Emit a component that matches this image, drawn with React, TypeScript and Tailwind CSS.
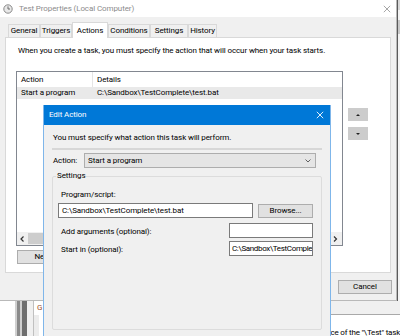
import React from "react";

function TitleIcon() {
  return (
    <svg width="10" height="10" viewBox="0 0 10 10" className="shrink-0">
      <circle cx="5" cy="5" r="4.2" fill="#e8e8e8" stroke="#8a8a8a" strokeWidth="1" />
      <path d="M5 2.4 V5 H7" fill="none" stroke="#6a6a6a" strokeWidth="1" />
    </svg>
  );
}

function CloseX({ color, size }: { color: string; size: number }) {
  return (
    <svg width={size} height={size} viewBox="0 0 10 10">
      <path d="M1 1 L9 9 M9 1 L1 9" stroke={color} strokeWidth="1.1" />
    </svg>
  );
}

function Tab({ label, w, selected }: { label: string; w: string; selected?: boolean }) {
  return (
    <div
      className={
        selected
          ? `${w} h-[16px] -mb-px bg-white border border-b-0 border-[#d9d9d9] flex items-center justify-center z-10`
          : `${w} h-[13px] bg-[#f0f0f0] border border-b-0 border-[#d9d9d9] flex items-center justify-center`
      }
    >
      {label}
    </div>
  );
}

function Tri({ up }: { up?: boolean }) {
  return (
    <svg width="4" height="2" viewBox="0 0 4 2">
      <path d={up ? "M0 2 L2 0 L4 2 Z" : "M0 0 L2 2 L4 0 Z"} fill="#222" />
    </svg>
  );
}

function Chevron({ dir }: { dir: "left" | "right" | "down" }) {
  if (dir === "down") {
    return (
      <svg width="6" height="4" viewBox="0 0 6 4">
        <path d="M0.5 0.5 L3 3 L5.5 0.5" fill="none" stroke="#606060" strokeWidth="1" />
      </svg>
    );
  }
  const d = dir === "left" ? "M3.5 0.5 L1 3 L3.5 5.5" : "M1 0.5 L3.5 3 L1 5.5";
  return (
    <svg width="5" height="6" viewBox="0 0 5 6">
      <path d={d} fill="none" stroke="#333" strokeWidth="1.2" />
    </svg>
  );
}

function MainWindow() {
  return (
    <div className="w-[397px] h-[301px] flex flex-col border-r border-b border-[#b9b9b9] bg-[#f0f0f0]">
      {/* title bar */}
      <div className="h-[17px] shrink-0 bg-white flex items-center pl-[3px] pr-[5px]">
        <TitleIcon />
        <span className="ml-[6px] text-[#8c8c8c]">Test Properties (Local Computer)</span>
        <div className="flex-1" />
        <CloseX color="#9a9a9a" size={8} />
      </div>
      {/* body */}
      <div className="flex-1 flex flex-col px-[5px]">
        <div className="h-[20px] shrink-0 flex items-end pl-[3px]">
          <Tab label="General" w="w-[32px]" />
          <Tab label="Triggers" w="w-[32px]" />
          <Tab label="Actions" w="w-[36px]" selected />
          <Tab label="Conditions" w="w-[42px]" />
          <Tab label="Settings" w="w-[38px]" />
          <Tab label="History" w="w-[29px]" />
        </div>
        <div className="w-[386px] h-[236px] shrink-0 bg-white border border-[#d9d9d9] flex flex-col">
          <p className="pl-[12px] pt-[7px] whitespace-nowrap">
            When you create a task, you must specify the action that will occur when your task starts.
          </p>
          <div className="flex mt-[14px] ml-[10px]">
            {/* list view */}
            <div className="w-[327px] h-[175px] border border-[#828790] bg-white flex flex-col">
              <div className="h-[15px] shrink-0 flex items-center">
                <div className="w-[76px] h-full pl-[4px] flex items-center border-r border-[#e5e5e5]">Action</div>
                <div className="pl-[4px]">Details</div>
              </div>
              <div className="h-[12px] shrink-0 bg-[#e9e9e9] flex items-center whitespace-nowrap">
                <div className="w-[76px] pl-[4px]">Start a program</div>
                <div className="pl-[4px]">C:\Sandbox\TestComplete\test.bat</div>
              </div>
              <div className="flex-1" />
              <div className="h-[13px] shrink-0 bg-[#f0f0f0] flex items-center">
                <div className="w-[11px] flex justify-center">
                  <Chevron dir="left" />
                </div>
                <div className="w-[16px] h-[11px] bg-[#cdcdcd]" />
                <div className="flex-1" />
                <div className="w-[13px] flex justify-center">
                  <Chevron dir="right" />
                </div>
              </div>
            </div>
            {/* up / down */}
            <div className="ml-[5px] mt-[37px] flex flex-col gap-[6px]">
              <div className="w-[20px] h-[13px] bg-[#cccccc] flex items-center justify-center">
                <Tri up />
              </div>
              <div className="w-[20px] h-[13px] bg-[#cccccc] flex items-center justify-center">
                <Tri />
              </div>
            </div>
          </div>
          <div className="mt-[4px] ml-[11px] w-[56px] h-[14px] bg-[#e1e1e1] border border-[#adadad] flex items-center justify-center">
            New...
          </div>
        </div>
        <div className="flex justify-end mt-[7px] -mr-[1px]">
          <div className="w-[54px] h-[14px] bg-[#e1e1e1] border border-[#adadad] flex items-center justify-center">
            Cancel
          </div>
        </div>
      </div>
    </div>
  );
}

function RightStrip() {
  return (
    <div className="w-[3px] h-[301px] bg-[#f4f4f4] border-l border-[#5a5a5a] flex flex-col">
      <div className="h-[10px] bg-[#d8d8d8]" />
      <div className="h-[10px]" />
      <div className="h-[14px] bg-[#c9c9c9]" />
    </div>
  );
}

function BottomArea() {
  return (
    <div className="flex h-[35px]">
      <div className="flex w-[43px]">
        <div className="w-[15px] bg-white" />
        <div className="w-[2px] bg-[#d0d0d0]" />
        <div className="w-[3px] bg-[#8a8a8a]" />
        <div className="w-[2px] bg-[#cfcfcf]" />
        <div className="w-[5px] bg-[#6e6e6e]" />
        <div className="w-[6px] bg-[#f0f0f0]" />
        <div className="w-[1px] bg-[#c0c0c0]" />
        <div className="flex-1 bg-white flex flex-col">
          <div className="h-[14px] pl-[3px] flex items-center text-[#a0522d]">G</div>
          <div className="flex-1 w-[5px] bg-[#ececec]" />
        </div>
      </div>
      <div className="w-[288px]" />
      <div className="flex-1 flex flex-col">
        <div className="h-[14px] bg-[#f0f0f0] border-b border-[#a9a9a9]" />
        <div className="flex-1 bg-white flex items-end whitespace-nowrap overflow-hidden">
          <span className="-mb-[3px] tracking-[-0.2px]">ce of the "\Test" task</span>
        </div>
      </div>
    </div>
  );
}

function Field({ children, w }: { children?: React.ReactNode; w: string }) {
  return (
    <div className={`${w} h-[15px] bg-white border border-[#7a7a7a] flex items-center pl-[2px] whitespace-nowrap overflow-hidden`}>
      {children}
    </div>
  );
}

function EditDialog() {
  return (
    <div className="absolute left-[43px] top-[105px] w-[288px] h-[240px] flex flex-col border-x border-[#7fb6ea] overflow-hidden">
      <div className="h-[20px] shrink-0 bg-[#0078d7] flex items-center pl-[5px] pr-[6px] text-white">
        <span>Edit Action</span>
        <div className="flex-1" />
        <CloseX color="#ffffff" size={8} />
      </div>
      <div className="flex-1 bg-[#f0f0f0] flex flex-col pl-[9px]">
        <p className="pt-[7px]">You must specify what action this task will perform.</p>
        <div className="mt-[4px] -ml-[1px] w-[270px] h-[2px] bg-[#d7d7d7]" />
        <div className="mt-[3px] flex items-center">
          <span className="w-[31px]">Action:</span>
          <div className="w-[232px] h-[15px] bg-[#e5e5e5] border border-[#adadad] flex items-center pl-[3px] pr-[4px]">
            <span>Start a program</span>
            <div className="flex-1" />
            <Chevron dir="down" />
          </div>
        </div>
        <fieldset className="-ml-[1px] w-[270px] h-[160px] border border-[#dcdcdc] rounded-[2px] mt-[2px] pl-[8px]">
          <legend className="-ml-[5px] px-[1px]">Settings</legend>
          <div className="pt-[7px]">Program/script:</div>
          <div className="mt-[2px] -ml-[3px] flex items-center">
            <Field w="w-[195px]"><span className="pl-[1px]">C:\Sandbox\TestComplete\test.bat</span></Field>
            <div className="ml-[5px] w-[55px] h-[14px] bg-[#e1e1e1] border border-[#adadad] flex items-center justify-center">
              Browse...
            </div>
          </div>
          <div className="mt-[5px] flex items-center">
            <span className="w-[168px] pt-[3px]">Add arguments (optional):</span>
            <Field w="w-[84px]" />
          </div>
          <div className="mt-[3px] flex items-center">
            <span className="w-[168px] pt-[2px]">Start in (optional):</span>
            <Field w="w-[84px]">
              <span className="tracking-[-0.35px]">C:\Sandbox\TestComple</span>
            </Field>
          </div>
        </fieldset>
      </div>
    </div>
  );
}

export default function App() {
  return (
    <div className="relative w-[400px] h-[336px] overflow-hidden bg-[#f0f0f0] font-['Roboto',sans-serif] text-[8px] tracking-[-0.1px] leading-[12px] text-black">
      <div className="flex">
        <MainWindow />
        <RightStrip />
      </div>
      <BottomArea />
      <EditDialog />
    </div>
  );
}
